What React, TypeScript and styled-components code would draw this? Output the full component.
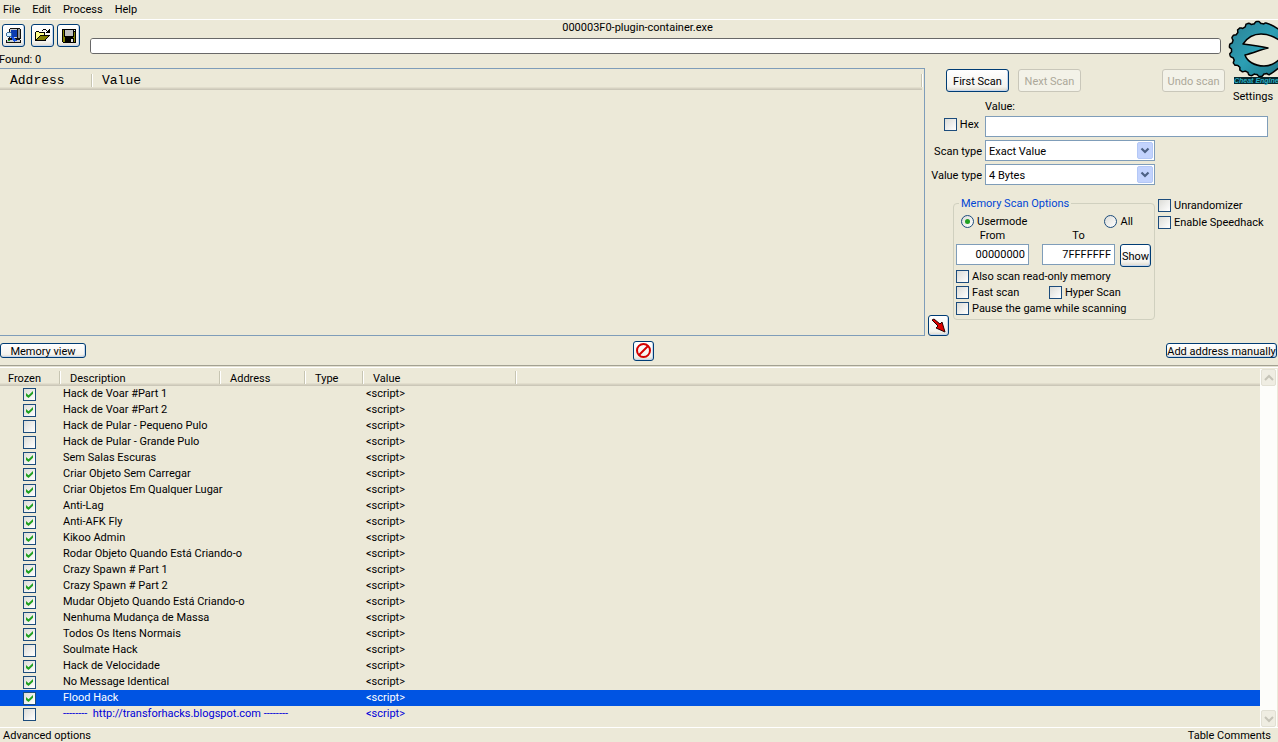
import React from "react";
import styled, { createGlobalStyle, css } from "styled-components";

const face = "#ece9d8";
const navy = "#1c4c7c";
const field = "#7f9db9";

const GlobalStyle = createGlobalStyle`
  *, *::before, *::after { box-sizing: border-box; }
  body { margin: 0; background: ${face}; overflow: hidden; }
  body, button, input, select {
    font-family: Roboto, "Liberation Sans", sans-serif;
    font-size: 11px;
    line-height: 14px;
    color: #000;
  }
`;

const Window = styled.div`
  display: flex;
  flex-direction: column;
  min-height: 100vh;
  background: ${face};
`;

const MenuBar = styled.nav`
  display: flex;
  align-items: flex-start;
  gap: 12px;
  height: 20px;
  padding: 3px 3px 0;
  border-bottom: 1px solid #fff;
`;

const FlatButton = styled.button`
  padding: 0;
  border: 0;
  background: none;
  white-space: nowrap;
`;

const Upper = styled.div`
  display: grid;
  grid-template-columns: minmax(0, 1fr) 303px 50px;
  grid-template-rows: 48px 268px;
`;

const Toolbar = styled.header`
  grid-area: 1 / 1 / 2 / 3;
  display: grid;
  grid-template-columns: 90px 1fr;
  padding-right: 7px;
`;

const ToolGroup = styled.div`
  display: flex;
  flex-direction: column;
  gap: 6px;
  padding: 4px 0 0 2px;
`;

const ToolRow = styled.div`
  display: flex;
  gap: 3px;
`;

const Found = styled.span`
  margin: 0 0 -1px -3px;
`;

const ProcessArea = styled.div`
  display: flex;
  flex-direction: column;
  gap: 3px;
  padding-top: 1px;
`;

const ProcessName = styled.div`
  padding-right: 36px;
  text-align: center;
`;

const ScanProgress = styled.progress`
  appearance: none;
  display: block;
  width: 100%;
  height: 16px;
  border: 1px solid #686868;
  border-radius: 3px;
  background: #fff;
  overflow: hidden;
  &::-webkit-progress-bar { background: #fff; }
`;

const PushButton = styled.button<{ $w?: number; $h?: number; $gap?: number }>`
  display: flex;
  align-items: center;
  justify-content: center;
  flex: none;
  width: ${(p) => (p.$w ? `${p.$w}px` : "auto")};
  height: ${(p) => p.$h ?? 23}px;
  margin-right: ${(p) => p.$gap ?? 0}px;
  padding: 0;
  border: 1px solid #003c74;
  border-radius: 3px;
  background: linear-gradient(#fff, #f4f3ee 80%, #dcd8cc);
  box-shadow: inset -1px -1px 0 #c6d6ec;
  white-space: nowrap;
  &:disabled {
    color: #aca899;
    border-color: #c9c7ba;
    background: #f3f2e8;
    box-shadow: none;
  }
`;

const TextButton = styled(PushButton)`
  padding-top: 2px;
`;

const Brand = styled.div`
  grid-area: 1 / 3 / 3 / 4;
  z-index: 1;
  align-self: start;
  display: flex;
  flex-direction: column;
  align-items: center;
  gap: 4px;
`;

const ResultPane = styled.section`
  grid-area: 2 / 1 / 3 / 2;
  padding-right: 2px;
  border: 1px solid ${field};
  border-left: 0;
`;

const DataTable = styled.table`
  width: 100%;
  table-layout: fixed;
  border-collapse: collapse;
`;

const HeadRow = styled.tr<{ $tall?: boolean }>`
  height: ${(p) => (p.$tall ? 21 : 19)}px;
  box-shadow: inset 0 -1px #cbc7b8, inset 0 -2px #d6d2c2, inset 0 -3px #e2decd;
`;

const HeadCell = styled.th<{ $mono?: boolean; $pad?: number; $last?: boolean }>`
  padding: 2px 0 0;
  font-weight: 400;
  text-align: left;
  ${(p) =>
    p.$mono &&
    css`
      font-family: "Liberation Mono", "Courier New", monospace;
      font-size: 13px;
    `}
  span {
    display: block;
    height: 13px;
    padding-left: ${(p) => p.$pad ?? 10}px;
    border-right: ${(p) => (p.$last ? "0" : "1px solid #c7c5b2")};
    box-shadow: ${(p) => (p.$last ? "none" : "1px 0 #fff")};
    line-height: ${(p) => (p.$mono ? 13 : 15)}px;
  }
`;

const ScanPanel = styled.section`
  grid-area: 2 / 2 / 3 / 4;
  display: flex;
  flex-direction: column;
  padding: 1px 10px 0 3px;
`;

const ScanButtons = styled.div`
  display: flex;
  padding: 0 43px 0 18px;
  margin-bottom: 7px;
  button:last-child { margin-left: auto; }
`;

const ScanForm = styled.div`
  display: grid;
  grid-template-columns: 54px minmax(0, 1fr);
  column-gap: 3px;
  row-gap: 3px;
  align-items: center;
  justify-items: end;
`;

const ValueLabel = styled.label`
  grid-column: 2;
  justify-self: start;
  height: 14px;
  line-height: 16px;
`;

const HexSlot = styled.div`
  align-self: start;
  padding: 1px 3px 0 0;
`;

const FieldLabel = styled.label`
  padding-top: 2px;
  white-space: nowrap;
`;

const TextField = styled.input<{ $w?: number }>`
  width: ${(p) => (p.$w ? `${p.$w}px` : "100%")};
  height: 21px;
  padding: 0 3px 1px;
  border: 1px solid ${field};
  border-radius: 0;
  background: #fff;
  text-align: ${(p) => (p.$w ? "right" : "left")};
`;

const SelectBox = styled.div`
  position: relative;
  justify-self: start;
  width: 170px;
  height: 21px;
  svg {
    position: absolute;
    top: 2px;
    right: 2px;
    pointer-events: none;
  }
`;

const Select = styled.select`
  appearance: none;
  display: block;
  width: 100%;
  height: 100%;
  padding: 2px 20px 0 3px;
  border: 1px solid ${field};
  border-radius: 0;
  background: #fff;
`;

const OptionsArea = styled.div`
  display: flex;
  align-items: flex-start;
  height: 140px;
  margin-top: 11px;
`;

const PointerSlot = styled.div`
  align-self: flex-end;
  margin-right: 4px;
`;

const Group = styled.fieldset`
  width: 202px;
  flex: none;
  margin: 0 3px 0 0;
  padding: 0 2px 3px;
  border: 1px solid #d0d0bf;
  border-radius: 4px;
`;

const Legend = styled.legend`
  height: 14px;
  margin-left: 3px;
  padding: 0 2px;
  line-height: 16px;
  color: #0046d5;
`;

const ModeRow = styled.div`
  display: flex;
  justify-content: space-between;
  padding: 4px 19px 0 5px;
`;

const RangeRow = styled.div`
  display: flex;
  align-items: flex-end;
  gap: 13px;
  margin-bottom: 2px;
`;

const RangeField = styled.label`
  display: flex;
  flex-direction: column;
  align-items: center;
  gap: 1px;
  margin-bottom: 2px;
`;

const ShowSlot = styled.div`
  margin-left: -8px;
`;

const CheckGrid = styled.div`
  display: grid;
  grid-template-columns: 93px 1fr;
  row-gap: 1px;
`;

const CheckLabel = styled.label<{ $wide?: boolean }>`
  display: flex;
  align-items: flex-start;
  gap: 3px;
  height: 15px;
  padding-top: 1px;
  white-space: nowrap;
  grid-column: ${(p) => (p.$wide ? "1 / -1" : "auto")};
`;

const SideChecks = styled.div`
  display: flex;
  flex-direction: column;
  gap: 2px;
  padding-top: 2px;
`;

const Tick = styled.input.attrs({ type: "checkbox" })`
  appearance: none;
  position: relative;
  display: block;
  flex: none;
  width: 13px;
  height: 13px;
  margin: 0;
  border: 1px solid ${navy};
  background: linear-gradient(135deg, #dcdcd7, #fff);
  &:checked::before {
    content: "";
    position: absolute;
    inset: 2px;
    background: #21a121;
    clip-path: polygon(0 28%, 36% 62%, 100% 0, 100% 40%, 36% 100%, 0 70%);
  }
`;

const Radio = styled.input.attrs({ type: "radio" })`
  appearance: none;
  position: relative;
  flex: none;
  width: 13px;
  height: 13px;
  margin: 0;
  border: 1px solid ${navy};
  border-radius: 50%;
  background: linear-gradient(135deg, #dcdcd7, #fff);
  &:checked::before {
    content: "";
    position: absolute;
    inset: 3px;
    border-radius: 50%;
    background: #21a121;
  }
`;

const ActionBar = styled.div`
  display: grid;
  grid-template-columns: 1fr auto 1fr;
  align-items: center;
  height: 29px;
  padding-right: 1px;
`;

const StopSlot = styled.div`
  margin-left: 9px;
`;

const EndSlot = styled.div`
  justify-self: end;
`;

const CheatPane = styled.section`
  flex: 1;
  display: grid;
  grid-template-columns: minmax(0, 1fr) 18px;
  border-top: 1px solid #a3a192;
  border-bottom: 1px solid #fff;
  box-shadow: inset 0 1px #e3e0d0, inset 0 2px #fff;
`;

const TableHolder = styled.div`
  padding-top: 1px;
`;

const CheatRow = styled.tr<{ $tone?: "selected" | "link" }>`
  height: 16px;
  color: ${(p) => (p.$tone === "selected" ? "#fff" : p.$tone === "link" ? "#0000d8" : "#000")};
  background: ${(p) => (p.$tone === "selected" ? "#0054e3" : "transparent")};
`;

const Cell = styled.td<{ $kind?: "check" | "text" }>`
  height: 16px;
  padding: ${(p) => (p.$kind === "check" ? "2px 0 0 23px" : "1px 0 0 3px")};
  line-height: 14px;
  vertical-align: top;
  white-space: pre;
`;

const ScrollBar = styled.div`
  display: flex;
  flex-direction: column;
  justify-content: space-between;
  margin: 3px 1px 0 0;
  background: #fdfdfa;
`;

const ScrollButton = styled.button`
  display: flex;
  align-items: center;
  justify-content: center;
  height: 17px;
  margin: 0 1px;
  padding: 0;
  border: 1px solid #e2e0d4;
  border-radius: 2px;
  background: #efede2;
`;

const StatusBar = styled.footer`
  display: flex;
  justify-content: space-between;
  height: 14px;
  padding: 2px 7px 0 3px;
  button { line-height: 12px; }
`;

const LogoLabel = styled.text`
  font: italic 700 7px "Liberation Sans", Arial, sans-serif;
`;

// Toothed left side of the gear, from just past the top round to the bottom.
function gearOutline(cx: number, cy: number) {
  const pts: string[] = [];
  for (let deg = -78; deg >= -290; deg -= 2) {
    const wave = Math.sin(((deg + 78) * Math.PI * 2) / 20);
    const r = 26.5 + Math.max(-1, Math.min(1, wave * 1.8)) * 1;
    const a = (deg * Math.PI) / 180;
    pts.push(`${(cx + r * Math.cos(a) * 1.08).toFixed(1)} ${(cy + r * Math.sin(a)).toFixed(1)}`);
  }
  return pts.join(" L");
}

function Logo() {
  const d = `M56 14 C51 9 45 5 38 3 L${gearOutline(31, 29)} C44 53 50 49 56 43 L56 35 C49 42 44 46 36 46 C26 46 19 41 17 35 C25 33 32 30 40 28 C32 26 24 25 15 24 C19 18 25 14 33 14 C41 14 48 17 56 24 Z`;
  return (
    <svg width="50" height="66" viewBox="0 0 50 66" role="img" aria-label="Cheat Engine">
      <defs>
        <linearGradient id="teal" x1="0" y1="0" x2="1" y2="1">
          <stop offset="0" stopColor="#2c7f93" />
          <stop offset="0.5" stopColor="#2c9fb4" />
          <stop offset="1" stopColor="#1b6f80" />
        </linearGradient>
      </defs>
      <path d={d} fill="url(#teal)" stroke="#000" strokeWidth="1.500" strokeLinejoin="round" />
      <path d="M6 57 H50 V64 H6 Z" fill="#06262c" />
      <LogoLabel x="6" y="63" fill="#2bb0c4">
        Cheat Engine
      </LogoLabel>
    </svg>
  );
}

const ProcessIcon = () => (
  <svg width="17" height="17" viewBox="0 0 17 17" shapeRendering="crispEdges" aria-hidden="true">
    <path d="M5 1h10v1h1v10h-1v1h1v3H1v-3h2v-2h1V2h1z" fill="#111" />
    <path d="M5 2h7v1H5zM5 3h1v7h6v1H5z" fill="#c9cdd2" />
    <path d="M6 3h6v7H6z" fill="#0b3bb0" />
    <path d="M13 2h2v9h-2z" fill="#8c9096" />
    <path d="M2 13h13v2H2z" fill="#c9cdd2" />
    <path d="M2 5h4v1h1v3H6v1H2V9H1V6h1z" fill="#3c6c9c" />
    <path d="M2 6h4v3H2z" fill="#d4f0ff" />
    <path d="M6 9h1v1h2v1h1v1h1v1h1v1h-2v1H9v-1H8v-1H7v-2H6z" fill="#1450e0" />
    <path d="M3 13h2v1H3z" fill="#2a2" />
  </svg>
);

const OpenIcon = () => (
  <svg width="17" height="17" viewBox="0 0 17 17" shapeRendering="crispEdges" aria-hidden="true">
    <path d="M1 5h1V4h3v1h6v3h5v1h-1v1h-1v1h-1v1h-1v2H1z" fill="#000" />
    <path d="M2 5h3v1h5v2H6v1H5v1H4v1H3v1H2z" fill="#ffff8c" />
    <path d="M6 9h8v1h-1v1h-1v1h-1v1H3v-1h1v-1h1v-1h1z" fill="#808000" />
    <path d="M9 2h3v1H9zM8 3h1v1H8zM12 3h1v1h-1zM15 2h1v4h-4V5h1V4h1V3h1z" fill="#000" />
  </svg>
);

const SaveIcon = () => (
  <svg width="16" height="16" viewBox="0 0 16 16" shapeRendering="crispEdges" aria-hidden="true">
    <path d="M1 1h14v14H2l-1-1z" fill="#000" />
    <path d="M2 2h1v7h1v1h8V9h1V4h1v10H2z" fill="#808000" />
    <path d="M4 2h8v6H4z" fill="#c0c0c0" />
    <path d="M13 2h1v1h-1z" fill="#eee" />
    <path d="M4 10h9v4H4z" fill="#000" />
    <path d="M10 11h2v3h-2z" fill="#e0e0e0" />
  </svg>
);

const PointerIcon = () => (
  <svg width="15" height="15" viewBox="0 0 15 15" aria-hidden="true">
    <path d="M1 2 L3 1 L9 6 L11 4 L14 14 L5 10 L7 8 Z" fill="#e00000" stroke="#2a0000" strokeWidth="1" />
  </svg>
);

const StopIcon = () => (
  <svg width="17" height="17" viewBox="0 0 17 17" aria-hidden="true">
    <circle cx="8.500" cy="8.500" r="6.500" fill="none" stroke="#d40000" strokeWidth="2" />
    <path d="M4 13 L13 4" stroke="#d40000" strokeWidth="2" />
  </svg>
);

const DropArrow = () => (
  <svg width="16" height="17" viewBox="0 0 16 17" aria-hidden="true">
    <rect x="0.500" y="0.500" width="15" height="16" rx="1.500" fill="#c3d3fd" stroke="#b4c8f6" />
    <path d="M4.500 6.500 L8 10 L11.500 6.500" fill="none" stroke="#4d6185" strokeWidth="2.200" />
  </svg>
);

const Chevron = ({ up }: { up?: boolean }) => (
  <svg width="10" height="8" viewBox="0 0 10 8" aria-hidden="true">
    <path d={up ? "M1 6 L5 2 L9 6" : "M1 2 L5 6 L9 2"} fill="none" stroke="#c6c4b8" strokeWidth="2" />
  </svg>
);

type Entry = { name: string; on: boolean; tone?: "selected" | "link" };

const entries: Entry[] = [
  { name: "Hack de Voar #Part 1", on: true },
  { name: "Hack de Voar #Part 2", on: true },
  { name: "Hack de Pular - Pequeno Pulo", on: false },
  { name: "Hack de Pular - Grande Pulo", on: false },
  { name: "Sem Salas Escuras", on: true },
  { name: "Criar Objeto Sem Carregar", on: true },
  { name: "Criar Objetos Em Qualquer Lugar", on: true },
  { name: "Anti-Lag", on: true },
  { name: "Anti-AFK Fly", on: true },
  { name: "Kikoo Admin", on: true },
  { name: "Rodar Objeto Quando Está Criando-o", on: true },
  { name: "Crazy Spawn # Part 1", on: true },
  { name: "Crazy Spawn # Part 2", on: true },
  { name: "Mudar Objeto Quando Está Criando-o", on: true },
  { name: "Nenhuma Mudança de Massa", on: true },
  { name: "Todos Os Itens Normais", on: true },
  { name: "Soulmate Hack", on: false },
  { name: "Hack de Velocidade", on: true },
  { name: "No Message Identical", on: true },
  { name: "Flood Hack", on: true, tone: "selected" },
  { name: "--------  http://transforhacks.blogspot.com --------", on: false, tone: "link" },
];

export default function App() {
  return (
    <Window>
      <GlobalStyle />
      <MenuBar>
        {["File", "Edit", "Process", "Help"].map((m) => (
          <FlatButton key={m}>{m}</FlatButton>
        ))}
      </MenuBar>

      <Upper>
        <Toolbar>
          <ToolGroup>
            <ToolRow>
              <PushButton $w={23} $gap={3} aria-label="Open process"><ProcessIcon /></PushButton>
              <PushButton $w={23} aria-label="Load"><OpenIcon /></PushButton>
              <PushButton $w={23} aria-label="Save"><SaveIcon /></PushButton>
            </ToolRow>
            <Found>Found: 0</Found>
          </ToolGroup>
          <ProcessArea>
            <ProcessName>000003F0-plugin-container.exe</ProcessName>
            <ScanProgress value={0} max={100} aria-label="Scan progress" />
          </ProcessArea>
        </Toolbar>

        <Brand>
          <Logo />
          <FlatButton>Settings</FlatButton>
        </Brand>

        <ResultPane>
          <DataTable>
            <colgroup>
              <col style={{ width: 92 }} />
              <col />
            </colgroup>
            <thead>
              <HeadRow $tall>
                <HeadCell $mono><span>Address</span></HeadCell>
                <HeadCell $mono><span>Value</span></HeadCell>
              </HeadRow>
            </thead>
          </DataTable>
        </ResultPane>

        <ScanPanel>
          <ScanButtons>
            <TextButton $w={63} $gap={9}>First Scan</TextButton>
            <TextButton $w={63} disabled>Next Scan</TextButton>
            <TextButton $w={63} disabled>Undo scan</TextButton>
          </ScanButtons>
          <ScanForm>
            <ValueLabel htmlFor="value">Value:</ValueLabel>
            <HexSlot><CheckLabel><Tick />Hex</CheckLabel></HexSlot>
            <TextField id="value" />
            <FieldLabel htmlFor="scan-type">Scan type</FieldLabel>
            <SelectBox>
              <Select id="scan-type"><option>Exact Value</option></Select>
              <DropArrow />
            </SelectBox>
            <FieldLabel htmlFor="value-type">Value type</FieldLabel>
            <SelectBox>
              <Select id="value-type"><option>4 Bytes</option></Select>
              <DropArrow />
            </SelectBox>
          </ScanForm>
          <OptionsArea>
            <PointerSlot>
              <PushButton $w={21} $h={21} aria-label="Select window"><PointerIcon /></PushButton>
            </PointerSlot>
            <Group>
              <Legend>Memory Scan Options</Legend>
              <ModeRow>
                <CheckLabel><Radio name="mode" defaultChecked />Usermode</CheckLabel>
                <CheckLabel><Radio name="mode" />All</CheckLabel>
              </ModeRow>
              <RangeRow>
                <RangeField>From<TextField $w={73} defaultValue="00000000" /></RangeField>
                <RangeField>To<TextField $w={73} defaultValue="7FFFFFFF" /></RangeField>
                <ShowSlot><TextButton $w={31}>Show</TextButton></ShowSlot>
              </RangeRow>
              <CheckGrid>
                <CheckLabel $wide><Tick />Also scan read-only memory</CheckLabel>
                <CheckLabel><Tick />Fast scan</CheckLabel>
                <CheckLabel><Tick />Hyper Scan</CheckLabel>
                <CheckLabel $wide><Tick />Pause the game while scanning</CheckLabel>
              </CheckGrid>
            </Group>
            <SideChecks>
              <CheckLabel><Tick />Unrandomizer</CheckLabel>
              <CheckLabel><Tick />Enable Speedhack</CheckLabel>
            </SideChecks>
          </OptionsArea>
        </ScanPanel>
      </Upper>

      <ActionBar>
        <div><TextButton $w={86} $h={15}>Memory view</TextButton></div>
        <StopSlot>
          <PushButton $w={21} $h={20} aria-label="Clear list"><StopIcon /></PushButton>
        </StopSlot>
        <EndSlot><TextButton $w={111} $h={15}>Add address manually</TextButton></EndSlot>
      </ActionBar>

      <CheatPane>
        <TableHolder>
          <DataTable>
            <colgroup>
              <col style={{ width: 60 }} />
              <col style={{ width: 160 }} />
              <col style={{ width: 85 }} />
              <col style={{ width: 58 }} />
              <col style={{ width: 153 }} />
              <col />
            </colgroup>
            <thead>
              <HeadRow>
                <HeadCell $pad={8}><span>Frozen</span></HeadCell>
                <HeadCell><span>Description</span></HeadCell>
                <HeadCell><span>Address</span></HeadCell>
                <HeadCell><span>Type</span></HeadCell>
                <HeadCell><span>Value</span></HeadCell>
                <HeadCell $last />
              </HeadRow>
            </thead>
            <tbody>
              {entries.map((e) => (
                <CheatRow key={e.name} $tone={e.tone}>
                  <Cell $kind="check"><Tick defaultChecked={e.on} aria-label={e.name} /></Cell>
                  <Cell>{e.name}</Cell>
                  <Cell />
                  <Cell />
                  <Cell>{"<script>"}</Cell>
                  <Cell />
                </CheatRow>
              ))}
            </tbody>
          </DataTable>
        </TableHolder>
        <ScrollBar>
          <ScrollButton aria-label="Scroll up"><Chevron up /></ScrollButton>
          <ScrollButton aria-label="Scroll down"><Chevron /></ScrollButton>
        </ScrollBar>
      </CheatPane>

      <StatusBar>
        <FlatButton>Advanced options</FlatButton>
        <FlatButton>Table Comments</FlatButton>
      </StatusBar>
    </Window>
  );
}
